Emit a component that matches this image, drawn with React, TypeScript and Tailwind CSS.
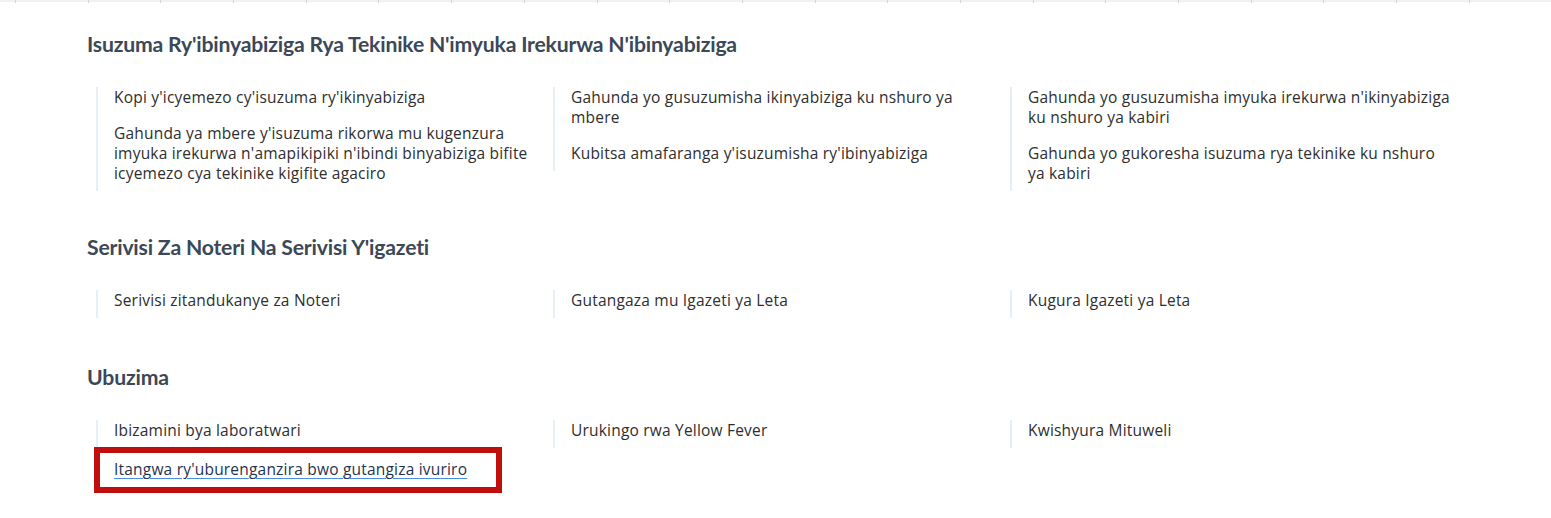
import React from "react";

type Section = { title: string; cols: string[][]; link?: string };

const sections: Section[] = [
  {
    title: "Isuzuma Ry'ibinyabiziga Rya Tekinike N'imyuka Irekurwa N'ibinyabiziga",
    cols: [
      [
        "Kopi y'icyemezo cy'isuzuma ry'ikinyabiziga",
        "Gahunda ya mbere y'isuzuma rikorwa mu kugenzura imyuka irekurwa n'amapikipiki n'ibindi binyabiziga bifite icyemezo cya tekinike kigifite agaciro",
      ],
      [
        "Gahunda yo gusuzumisha ikinyabiziga ku nshuro ya mbere",
        "Kubitsa amafaranga y'isuzumisha ry'ibinyabiziga",
      ],
      [
        "Gahunda yo gusuzumisha imyuka irekurwa n'ikinyabiziga ku nshuro ya kabiri",
        "Gahunda yo gukoresha isuzuma rya tekinike ku nshuro ya kabiri",
      ],
    ],
  },
  {
    title: "Serivisi Za Noteri Na Serivisi Y'igazeti",
    cols: [["Serivisi zitandukanye za Noteri"], ["Gutangaza mu Igazeti ya Leta"], ["Kugura Igazeti ya Leta"]],
  },
  {
    title: "Ubuzima",
    cols: [["Ibizamini bya laboratwari"], ["Urukingo rwa Yellow Fever"], ["Kwishyura Mituweli"]],
    link: "Itangwa ry'uburenganzira bwo gutangiza ivuriro",
  },
];

export default function App() {
  return (
    <div className="w-[1551px] h-[518px] bg-white overflow-hidden" style={{ fontFamily: "'Open Sans', 'Noto Sans', sans-serif" }}>
      <div className="h-[2px] bg-[#f1f1f1] flex pl-[15px]">
        {Array.from({ length: 21 }).map((_, i) => (
          <div key={i} className="w-[72.7px] shrink-0 border-l border-[#d6d6d6] h-[3px]" />
        ))}
      </div>
      <div className="pl-[87px] pt-[27px]">
        {sections.map((s, si) => (
          <div key={si} className={si === 0 ? "" : si === 1 ? "mt-[41px]" : "mt-[44px]"}>
            <h2 className="font-['Lato'] text-[21.2px] leading-[30px] font-bold text-[#3b4858] tracking-[-0.2px]">{s.title}</h2>
            <div className="mt-[28px] ml-[9px] grid grid-cols-[457px_457px_457px] items-start">
              {s.cols.map((col, ci) => (
                <div key={ci}>
                  <ul className="border-l-2 border-[#e6eef8] pl-[16px] flex flex-col gap-[16px] pb-[8px]">
                    {col.map((t, ti) => (
                      <li key={ti} className="w-[426px] text-[15.5px] tracking-[0.2px] leading-[20px] text-[#2e2e2e]">
                        {t}
                      </li>
                    ))}
                  </ul>
                  {ci === 0 && s.link && (
                    <div className="-mt-[1px] -ml-[2px] w-[408px] border-[6px] border-[#c00d0d] pl-[14px] pt-[4px] pb-[6px]">
                      <a href="#" className="text-[15.5px] tracking-[0.2px] leading-[20px] text-[#1f3350] underline decoration-[#4a90e2] underline-offset-[3px]">
                        {s.link}
                      </a>
                    </div>
                  )}
                </div>
              ))}
            </div>
          </div>
        ))}
      </div>
    </div>
  );
}
